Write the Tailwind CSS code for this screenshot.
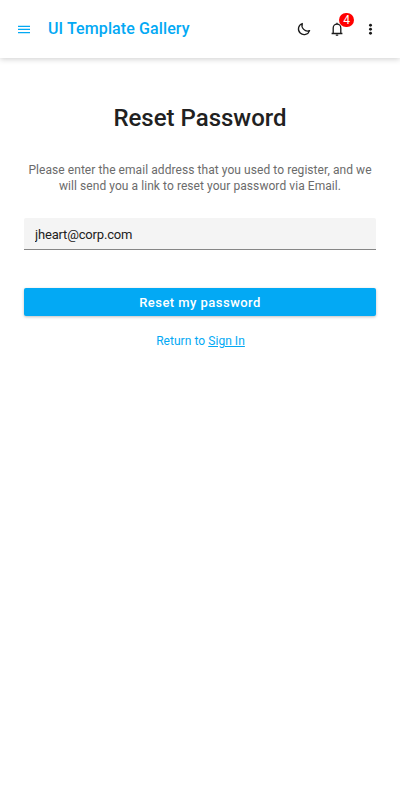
<!DOCTYPE html>
<html lang="en">
<head>
<meta charset="utf-8">
<title>Reset Password</title>
<script src="https://cdn.jsdelivr.net/npm/@tailwindcss/browser@4"></script>
</head>
<body class="min-h-screen bg-white font-['Roboto',sans-serif] text-[#212121]">
<header class="flex h-[58px] items-center px-4 shadow-[0_1px_6px_rgba(0,0,0,0.2)]">
  <button class="size-4 text-[#03a9f4]" aria-label="Menu">
    <svg class="block size-4" viewBox="0 0 16 16" fill="currentColor"><path d="M2 4.700h12v1.300H2zM2 7.700h12v1.300H2zM2 11h12v1.300H2z"/></svg>
  </button>
  <h1 class="ml-4 text-base font-medium tracking-[0.110px] text-[#03a9f4]">UI Template Gallery</h1>
  <div class="ml-auto flex items-center gap-[17px] pr-1.5 text-[#1a1a1a]">
    <svg class="size-4" viewBox="0 0 16 16" fill="none" stroke="currentColor" stroke-width="1.300"><path d="M6.300 2.500A5.700 5.700 0 1 0 13.600 9.600A5.600 5.600 0 0 1 6.300 2.500z" stroke-linejoin="round"/></svg>
    <div class="relative size-4">
      <svg class="block size-4" viewBox="0 0 16 16" fill="none" stroke="currentColor" stroke-width="1.300"><path d="M2.600 12.500h10.800M4.200 12.500V7a3.800 3.800 0 0 1 7.600 0v5.500"/><path d="M8 3.200V1.700M6.800 14.200h2.400"/></svg>
      <span class="absolute left-[10px] -top-2 flex h-[14px] w-[15px] items-center justify-center rounded-full bg-[#f00] text-xs text-white">4</span>
    </div>
    <svg class="size-4 translate-x-[0.500px]" viewBox="0 0 16 16" fill="currentColor"><circle cx="8" cy="4.200" r="1.450"/><circle cx="8" cy="8.200" r="1.450"/><circle cx="8" cy="12.200" r="1.450"/></svg>
  </div>
</header>
<main class="px-6 pt-11 text-center">
  <h2 class="text-2xl font-medium">Reset Password</h2>
  <p class="mt-7 text-xs tracking-[0.065px] text-[#6b6b6b]">Please enter the email address that you used to register, and we will send you a link to reset your password via Email.</p>
  <input class="mt-6 block h-8 w-full rounded-t-[2px] border-b border-[#868686] bg-[#f4f4f4] px-[11px] pt-0.5 text-[13px] tracking-[-0.170px] outline-none" type="email" value="jheart@corp.com">
  <button class="mt-[38px] block h-7 w-full rounded-[2px] bg-[#03a9f4] pt-0.5 text-[13px] font-medium tracking-[0.460px] text-white shadow-[0_1px_3px_rgba(0,0,0,0.25)]">Reset my password</button>
  <p class="mt-[17px] pl-px text-xs tracking-[0.050px] text-[#03a9f4]">Return to <a class="underline" href="#">Sign In</a></p>
</main>
</body>
</html>
